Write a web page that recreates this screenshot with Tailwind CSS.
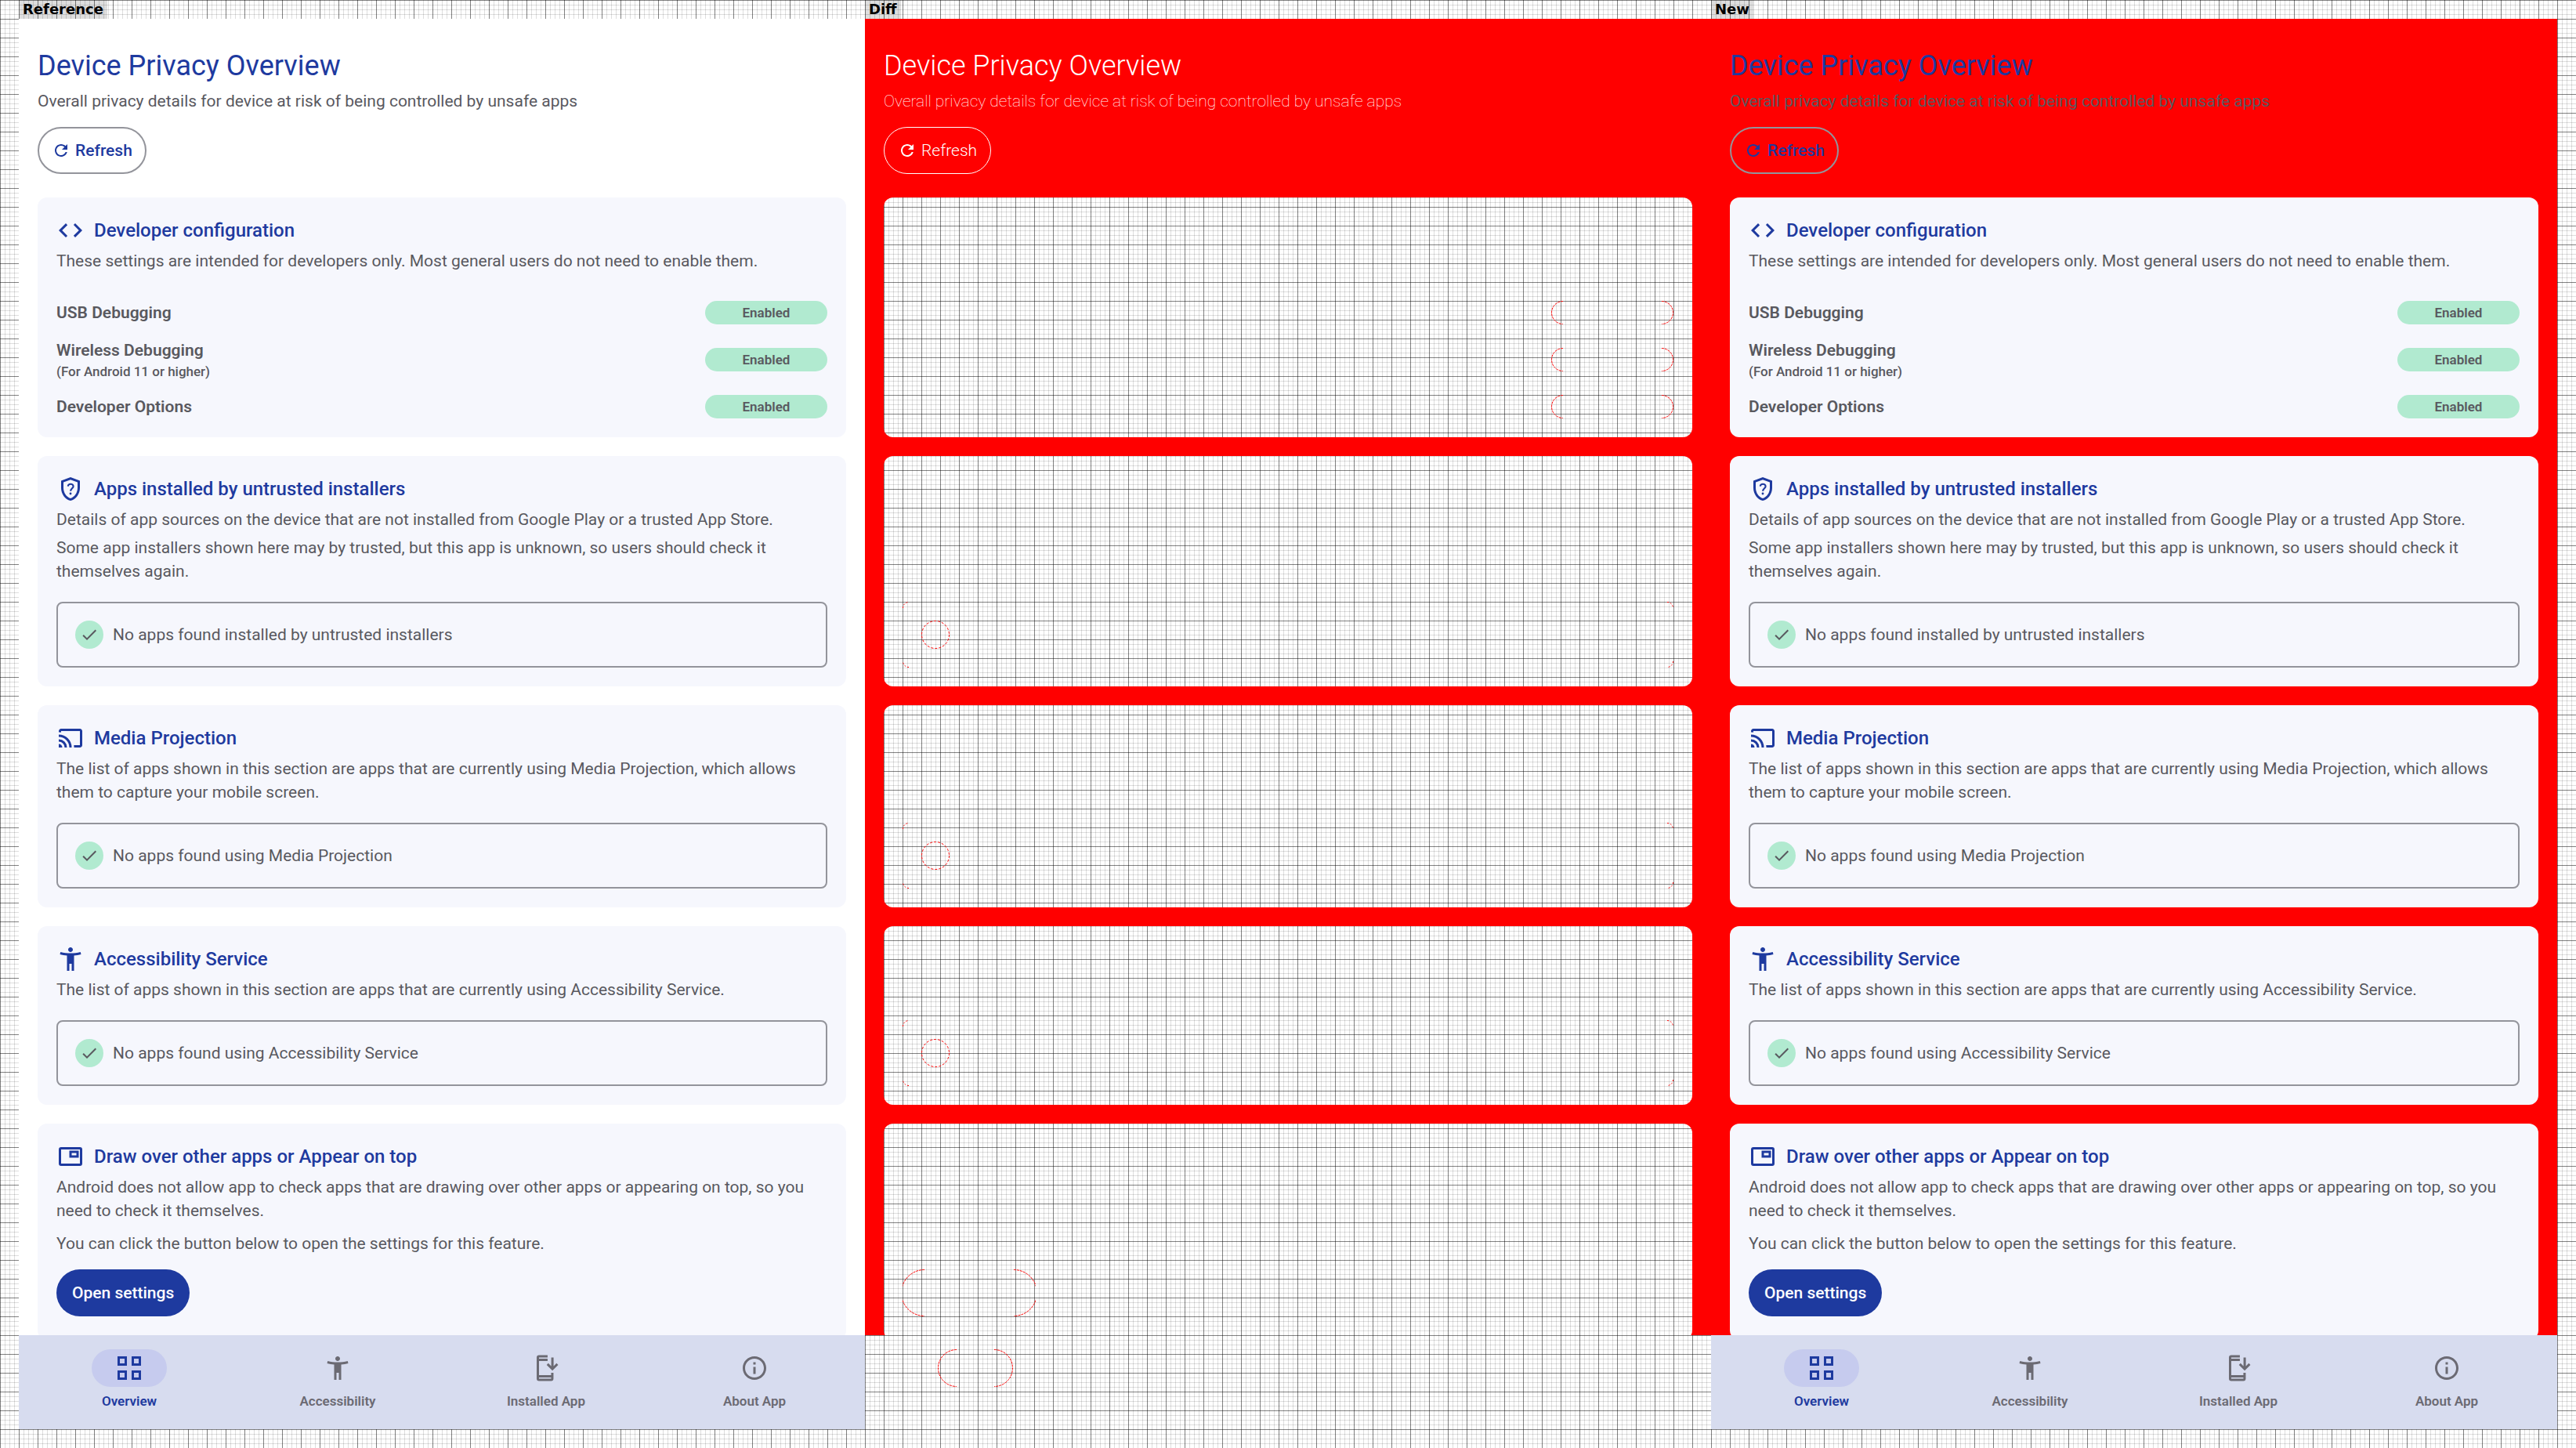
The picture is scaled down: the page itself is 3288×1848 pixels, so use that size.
<!DOCTYPE html>
<html lang="en">
<head>
<meta charset="utf-8">
<meta name="viewport" content="width=device-width, initial-scale=1">
<title>Device Privacy Overview: Reference, Diff, New</title>
<script src="https://cdn.jsdelivr.net/npm/@tailwindcss/browser@4"></script>
</head>
<body class="flex h-screen flex-col overflow-hidden bg-white bg-[linear-gradient(to_right,rgba(0,0,0,0.42)_1px,transparent_1px),linear-gradient(to_bottom,rgba(0,0,0,0.42)_1px,transparent_1px),linear-gradient(to_right,rgba(0,0,0,0.13)_1px,transparent_1px),linear-gradient(to_bottom,rgba(0,0,0,0.13)_1px,transparent_1px)] bg-[length:24px_24px,24px_24px,6px_6px,6px_6px] px-6 pb-6 font-['Roboto',sans-serif] text-[21px] leading-[30px] text-[#59595f]">

<!-- Icon library -->
<svg class="hidden" xmlns="http://www.w3.org/2000/svg">
  <symbol id="i-refresh" viewBox="0 0 24 24"><path d="M17.65 6.35C16.2 4.9 14.21 4 12 4c-4.42 0-7.99 3.58-7.99 8s3.57 8 7.99 8c3.73 0 6.84-2.55 7.73-6h-2.08c-.82 2.33-3.04 4-5.65 4-3.31 0-6-2.69-6-6s2.69-6 6-6c1.66 0 3.14.69 4.22 1.78L13 11h7V4l-2.35 2.35z"/></symbol>
  <symbol id="i-code" viewBox="0 0 24 24"><path d="M8 18l-6-6 6-6 1.43 1.43L4.83 12.03 9.4 16.6 8 18zm8 0l-1.42-1.43 4.6-4.6L14.6 7.4 16 6l6 6-6 6z"/></symbol>
  <symbol id="i-shield" viewBox="0 0 24 24"><path d="M12 2L4 5v6.09c0 5.05 3.41 9.76 8 10.91 4.59-1.15 8-5.86 8-10.91V5l-8-3zm6 9.09c0 4-2.55 7.7-6 8.83-3.45-1.13-6-4.82-6-8.83v-4.7l6-2.25 6 2.25v4.7z"/><path d="M9.8 9.7c.2-1.2 1.1-1.9 2.3-1.9 1.3 0 2.3.9 2.3 2 0 1.700-2.300 1.900-2.300 4.100" fill="none" stroke="currentColor" stroke-width="1.400"/><circle cx="12" cy="16" r=".95"/></symbol>
  <symbol id="i-cast" viewBox="0 -960 960 960"><path d="M800-160H600q0-20-1.500-40t-4.500-40h206v-480H160v46q-20-3-40-4.500T80-680v-40q0-33 23.500-56.500T160-800h640q33 0 56.500 23.500T880-720v480q0 33-23.500 56.500T800-160Zm-720 0v-120q50 0 85 35t35 85H80Zm200 0q0-83-58.500-141.500T80-360v-80q117 0 198.500 81.500T360-160h-80Zm160 0q0-75-28.500-140.500t-77-114q-48.500-48.500-114-77T80-520v-80q91 0 171 34.500T391-471q60 60 94.500 140T520-160h-80Z"/></symbol>
  <symbol id="i-access" viewBox="0 0 24 24"><path d="M20.500 6c-2.610.7-5.670 1-8.500 1s-5.890-.3-8.500-1L3 8c1.860.5 4 .83 6 1v13h2v-6h2v6h2V9c2-.17 4.140-.5 6-1l-.5-2zM12 6c1.100 0 2-.9 2-2s-.9-2-2-2-2 .9-2 2 .9 2 2 2z"/></symbol>
  <symbol id="i-pip" viewBox="0 0 24 24"><path fill-rule="evenodd" d="M4 4h16a2 2 0 0 1 2 2v12a2 2 0 0 1-2 2H4a2 2 0 0 1-2-2V6a2 2 0 0 1 2-2zM4 6v12h16V6zM11 7h8v6h-8zM13 9v2h4V9z"/></symbol>
  <symbol id="i-check" viewBox="0 0 24 24"><path d="M9 16.170L4.830 12l-1.420 1.410L9 19 21 7l-1.410-1.410z"/></symbol>
  <symbol id="i-grid" viewBox="0 0 24 24"><path fill-rule="evenodd" d="M2 2h8v8H2zM4 4v4h4V4zM14 2h8v8h-8zM16 4v4h4V4zM2 14h8v8H2zM4 16v4h4v-4zM14 14h8v8h-8zM16 16v4h4v-4z"/></symbol>
  <symbol id="i-install" viewBox="0 0 24 24"><g fill="none" stroke="currentColor" stroke-width="2"><path d="M13.300 2H6a1 1 0 0 0-1 1v18a1 1 0 0 0 1 1h10.300a1 1 0 0 0 1-1v-5"/><path d="M5 5h8.300M5 19h12.300M17.400 3v10M13.200 8.600l4.200 4.200 4.200-4.200"/></g></symbol>
  <symbol id="i-info" viewBox="0 0 24 24"><path d="M11 7h2v2h-2zm0 4h2v6h-2zm1-9C6.480 2 2 6.480 2 12s4.480 10 10 10 10-4.480 10-10S17.520 2 12 2zm0 18c-4.410 0-8-3.590-8-8s3.590-8 8-8 8 3.590 8 8-3.590 8-8 8z"/></symbol>
  <symbol id="d-box" viewBox="0 0 8 8"><path d="M.5 8A7.500 7.500 0 0 1 8 .5" fill="none" stroke="currentColor" stroke-dasharray="2 2"/></symbol>
</svg>

<header class="grid h-6 shrink-0 grid-cols-3 font-['DejaVu_Sans',sans-serif] text-[18px] leading-6 font-bold text-black">
  <h2><span class="inline-block bg-black/13 px-[5px]">Reference</span></h2>
  <h2><span class="inline-block bg-black/13 px-[5px]">Diff</span></h2>
  <h2><span class="inline-block bg-black/13 px-[5px]">New</span></h2>
</header>

<div class="grid min-h-0 flex-1 grid-cols-3 grid-rows-1">
  <section data-screen class="flex min-h-0 flex-col bg-white" aria-label="Reference"></section>

  <!-- Changed pixels are red, unchanged ones show the grid -->
  <section class="flex min-h-0 flex-col" aria-label="Diff">
    <div class="min-h-0 flex-1 overflow-hidden bg-[#ff0000] px-6 pt-9 text-white">
      <h1 class="text-[36px] leading-[48px] font-light">Device Privacy Overview</h1>
      <p class="mt-1.5 font-thin">Overall privacy details for device at risk of being controlled by unsafe apps</p>
      <button type="button" class="mt-[18px] flex h-[60px] items-center gap-1.5 rounded-full border border-white px-[17px] font-light">
        <svg class="size-6 fill-current"><use href="#i-refresh"/></svg>Refresh</button>
      <div id="diff-cards" class="mt-[30px] flex flex-col gap-6 text-[#ff0000]">
        <div class="flex h-[306px] flex-col items-end gap-[30px] rounded-xl bg-white bg-[linear-gradient(to_right,rgba(0,0,0,0.42)_1px,transparent_1px),linear-gradient(to_bottom,rgba(0,0,0,0.42)_1px,transparent_1px),linear-gradient(to_right,rgba(0,0,0,0.13)_1px,transparent_1px),linear-gradient(to_bottom,rgba(0,0,0,0.13)_1px,transparent_1px)] bg-[length:24px_24px,24px_24px,6px_6px,6px_6px] bg-fixed px-6 pt-[132px]">
          <svg class="h-[30px] w-[156px] fill-none stroke-current" viewBox="0 0 156 30" stroke-dasharray="3 1"><path d="M15 .5A14.500 14.500 0 0 0 15 29.500M141 .5A14.500 14.500 0 0 1 141 29.500"/></svg>
          <svg class="h-[30px] w-[156px] fill-none stroke-current" viewBox="0 0 156 30" stroke-dasharray="3 1"><path d="M15 .5A14.500 14.500 0 0 0 15 29.500M141 .5A14.500 14.500 0 0 1 141 29.500"/></svg>
          <svg class="h-[30px] w-[156px] fill-none stroke-current" viewBox="0 0 156 30" stroke-dasharray="3 1"><path d="M15 .5A14.500 14.500 0 0 0 15 29.500M141 .5A14.500 14.500 0 0 1 141 29.500"/></svg>
        </div>
        <div data-empty class="flex h-[294px] flex-col justify-end rounded-xl bg-white bg-[linear-gradient(to_right,rgba(0,0,0,0.42)_1px,transparent_1px),linear-gradient(to_bottom,rgba(0,0,0,0.42)_1px,transparent_1px),linear-gradient(to_right,rgba(0,0,0,0.13)_1px,transparent_1px),linear-gradient(to_bottom,rgba(0,0,0,0.13)_1px,transparent_1px)] bg-[length:24px_24px,24px_24px,6px_6px,6px_6px] bg-fixed p-6"></div>
        <div data-empty class="flex h-[258px] flex-col justify-end rounded-xl bg-white bg-[linear-gradient(to_right,rgba(0,0,0,0.42)_1px,transparent_1px),linear-gradient(to_bottom,rgba(0,0,0,0.42)_1px,transparent_1px),linear-gradient(to_right,rgba(0,0,0,0.13)_1px,transparent_1px),linear-gradient(to_bottom,rgba(0,0,0,0.13)_1px,transparent_1px)] bg-[length:24px_24px,24px_24px,6px_6px,6px_6px] bg-fixed p-6"></div>
        <div data-empty class="flex h-[228px] flex-col justify-end rounded-xl bg-white bg-[linear-gradient(to_right,rgba(0,0,0,0.42)_1px,transparent_1px),linear-gradient(to_bottom,rgba(0,0,0,0.42)_1px,transparent_1px),linear-gradient(to_right,rgba(0,0,0,0.13)_1px,transparent_1px),linear-gradient(to_bottom,rgba(0,0,0,0.13)_1px,transparent_1px)] bg-[length:24px_24px,24px_24px,6px_6px,6px_6px] bg-fixed p-6"></div>
        <div class="flex h-[276px] flex-col justify-end rounded-xl bg-white bg-[linear-gradient(to_right,rgba(0,0,0,0.42)_1px,transparent_1px),linear-gradient(to_bottom,rgba(0,0,0,0.42)_1px,transparent_1px),linear-gradient(to_right,rgba(0,0,0,0.13)_1px,transparent_1px),linear-gradient(to_bottom,rgba(0,0,0,0.13)_1px,transparent_1px)] bg-[length:24px_24px,24px_24px,6px_6px,6px_6px] bg-fixed px-6 pb-[30px]">
          <svg class="h-[60px] w-[170px] fill-none stroke-current" viewBox="0 0 170 60" stroke-dasharray="3 1"><path d="M28 .5A29.500 29.500 0 0 0 28 59.500M142 .5A29.500 29.500 0 0 1 142 59.500"/></svg>
        </div>
      </div>
    </div>
    <div class="grid h-[120px] shrink-0 grid-cols-4 gap-2 px-3 pt-[18px] text-[#ff0000]">
      <svg class="h-12 w-24 justify-self-center fill-none stroke-current" viewBox="0 0 96 48" stroke-dasharray="3 1"><path d="M24 .5A23.500 23.500 0 0 0 24 47.500M72 .5A23.500 23.500 0 0 1 72 47.500"/></svg>
    </div>
  </section>

  <section data-screen class="flex min-h-0 flex-col bg-[#ff0000]" aria-label="New"></section>
</div>

<!-- Phone screen, shown in the first and last column -->
<template id="screen">
  <div class="min-h-0 flex-1 overflow-hidden px-6 pt-9">
    <h1 class="text-[36px] leading-[48px] text-[#1e3a9f]">Device Privacy Overview</h1>
    <p class="mt-1.5">Overall privacy details for device at risk of being controlled by unsafe apps</p>
    <button type="button" class="mt-[18px] flex h-[60px] items-center gap-1.5 rounded-full border-2 border-[#93949b] px-4 font-medium text-[#1e3a9f]">
      <svg class="size-6 fill-current"><use href="#i-refresh"/></svg>Refresh</button>
    <div class="mt-[30px] flex flex-col gap-6">
      <article class="rounded-xl bg-[#f6f7fd] p-6">
        <h2 class="flex items-center gap-3 text-[24px] leading-9 font-medium text-[#1e3a9f]"><svg class="size-9 fill-current"><use href="#i-code"/></svg>Developer configuration</h2>
        <p class="mt-1.5">These settings are intended for developers only. Most general users do not need to enable them.</p>
        <div class="mt-9 flex flex-col gap-[18px] font-semibold">
          <div class="flex items-center justify-between"><span>USB Debugging</span><span class="w-[156px] rounded-full bg-[#b1ead0] py-[3px] text-center text-[17px] leading-6">Enabled</span></div>
          <div class="flex items-center justify-between"><div><p>Wireless Debugging</p><p class="text-[17px] leading-6 font-medium">(For Android 11 or higher)</p></div><span class="w-[156px] rounded-full bg-[#b1ead0] py-[3px] text-center text-[17px] leading-6">Enabled</span></div>
          <div class="flex items-center justify-between"><span>Developer Options</span><span class="w-[156px] rounded-full bg-[#b1ead0] py-[3px] text-center text-[17px] leading-6">Enabled</span></div>
        </div>
      </article>
      <article class="rounded-xl bg-[#f6f7fd] p-6">
        <h2 class="flex items-center gap-3 text-[24px] leading-9 font-medium text-[#1e3a9f]"><svg class="size-9 fill-current"><use href="#i-shield"/></svg>Apps installed by untrusted installers</h2>
        <p class="mt-1.5">Details of app sources on the device that are not installed from Google Play or a trusted App Store.</p>
        <p class="mt-1.5">Some app installers shown here may by trusted, but this app is unknown, so users should check it themselves again.</p>
        <div class="mt-6 flex h-[84px] items-center gap-3 rounded-lg border-2 border-[#93949b] px-[22px]"><span class="flex size-9 items-center justify-center rounded-full bg-[#b1ead0]"><svg class="size-6 fill-current"><use href="#i-check"/></svg></span><span>No apps found installed by untrusted installers</span></div>
      </article>
      <article class="rounded-xl bg-[#f6f7fd] p-6">
        <h2 class="flex items-center gap-3 text-[24px] leading-9 font-medium text-[#1e3a9f]"><svg class="size-9 fill-current"><use href="#i-cast"/></svg>Media Projection</h2>
        <p class="mt-1.5">The list of apps shown in this section are apps that are currently using Media Projection, which allows them to capture your mobile screen.</p>
        <div class="mt-6 flex h-[84px] items-center gap-3 rounded-lg border-2 border-[#93949b] px-[22px]"><span class="flex size-9 items-center justify-center rounded-full bg-[#b1ead0]"><svg class="size-6 fill-current"><use href="#i-check"/></svg></span><span>No apps found using Media Projection</span></div>
      </article>
      <article class="rounded-xl bg-[#f6f7fd] p-6">
        <h2 class="flex items-center gap-3 text-[24px] leading-9 font-medium text-[#1e3a9f]"><svg class="size-9 fill-current"><use href="#i-access"/></svg>Accessibility Service</h2>
        <p class="mt-1.5">The list of apps shown in this section are apps that are currently using Accessibility Service.</p>
        <div class="mt-6 flex h-[84px] items-center gap-3 rounded-lg border-2 border-[#93949b] px-[22px]"><span class="flex size-9 items-center justify-center rounded-full bg-[#b1ead0]"><svg class="size-6 fill-current"><use href="#i-check"/></svg></span><span>No apps found using Accessibility Service</span></div>
      </article>
      <article class="rounded-xl bg-[#f6f7fd] px-6 pt-6 pb-[30px]">
        <h2 class="flex items-center gap-3 text-[24px] leading-9 font-medium text-[#1e3a9f]"><svg class="size-9 fill-current"><use href="#i-pip"/></svg>Draw over other apps or Appear on top</h2>
        <p class="mt-1.5">Android does not allow app to check apps that are drawing over other apps or appearing on top, so you need to check it themselves.</p>
        <p class="mt-3">You can click the button below to open the settings for this feature.</p>
        <button type="button" class="mt-[18px] block h-[60px] rounded-full bg-[#1e3a9f] px-5 font-medium text-white">Open settings</button>
      </article>
    </div>
  </div>
  <nav class="grid shrink-0 grid-cols-4 gap-2 bg-[#d7dcef] px-3 pt-[18px] pb-6 text-[17px] leading-6 font-semibold text-[#6b6a73]">
    <a href="#overview" aria-current="page" class="flex flex-col items-center gap-1.5 text-[#1e3a9f]"><span class="flex h-12 w-24 items-center justify-center rounded-full bg-[#c6cbee]"><svg class="size-9 fill-current"><use href="#i-grid"/></svg></span>Overview</a>
    <a href="#accessibility" class="flex flex-col items-center gap-1.5"><span class="flex h-12 w-24 items-center justify-center"><svg class="size-9 fill-current"><use href="#i-access"/></svg></span>Accessibility</a>
    <a href="#installed" class="flex flex-col items-center gap-1.5"><span class="flex h-12 w-24 items-center justify-center"><svg class="size-9 fill-current"><use href="#i-install"/></svg></span>Installed App</a>
    <a href="#about" class="flex flex-col items-center gap-1.5"><span class="flex h-12 w-24 items-center justify-center"><svg class="size-9 fill-current"><use href="#i-info"/></svg></span>About App</a>
  </nav>
</template>

<!-- Outline pixels that differ on an empty-state box -->
<template id="empty-diff">
  <div class="flex h-[84px] flex-col justify-between">
    <div class="flex justify-between"><svg class="size-2"><use href="#d-box"/></svg><svg class="size-2 rotate-90"><use href="#d-box"/></svg></div>
    <svg class="ml-6 size-9 fill-none stroke-current" viewBox="0 0 36 36" stroke-dasharray="3 2"><circle cx="18" cy="18" r="17.500"/></svg>
    <div class="flex justify-between"><svg class="size-2 -rotate-90"><use href="#d-box"/></svg><svg class="size-2 rotate-180"><use href="#d-box"/></svg></div>
  </div>
</template>

<script>
for (const el of document.querySelectorAll('[data-screen]')) el.append(document.getElementById('screen').content.cloneNode(true));
for (const el of document.querySelectorAll('[data-empty]')) el.append(document.getElementById('empty-diff').content.cloneNode(true));
</script>
</body>
</html>
